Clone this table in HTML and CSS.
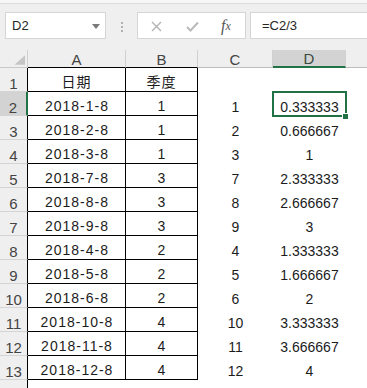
FILE: index.html
```html
<!DOCTYPE html>
<html lang="zh">
<head>
<meta charset="utf-8">
<title>Sheet</title>
<link rel="stylesheet" href="styles.css">
</head>
<body>
<div class="app">
  <div class="toolbar">
    <div class="namebox">
      <span class="nb-text">D2</span>
      <svg class="caret" width="8" height="5" viewBox="0 0 8 5"><polygon points="0,0 8,0 4,5" fill="#7a7a7a"/></svg>
    </div>
    <div class="dots"><i></i><i></i><i></i></div>
    <div class="btnbox">
      <svg class="ico-x" width="11" height="11" viewBox="0 0 11 11"><path d="M1 1 L10 10 M10 1 L1 10" stroke="#b3b3b3" stroke-width="1.4" fill="none"/></svg>
      <svg class="ico-ok" width="13" height="11" viewBox="0 0 13 11"><path d="M1 6 L4.5 9.5 L12 1.5" stroke="#bababa" stroke-width="2" fill="none"/></svg>
      <span class="fx"><span class="fx-f">f</span><span class="fx-x">x</span></span>
    </div>
    <div class="formula">=C2/3</div>
  </div>

  <div class="grid">
    <div class="hd corner"><svg width="28" height="17" viewBox="0 0 28 17"><polygon points="26,5 26,15 15,15" fill="#c6c6c6"/></svg></div>
    <div class="hd col tb">A</div>
    <div class="hd col tb">B</div>
    <div class="hd col">C</div>
    <div class="hd col sel">D</div>
    <div class="hd col last"></div>

    <div class="rh">1</div><div class="c ca cjk">日期</div><div class="c cb cjk">季度</div><div class="c"></div><div class="c"></div><div class="c"></div>

    <div class="rh rsel">2</div><div class="c ca date">2018-1-8</div><div class="c cb">1</div><div class="c">1</div><div class="c active">0.333333<span class="handle"></span></div><div class="c"></div>
    <div class="rh">3</div><div class="c ca date">2018-2-8</div><div class="c cb">1</div><div class="c">2</div><div class="c">0.666667</div><div class="c"></div>
    <div class="rh">4</div><div class="c ca date">2018-3-8</div><div class="c cb">1</div><div class="c">3</div><div class="c">1</div><div class="c"></div>
    <div class="rh">5</div><div class="c ca date">2018-7-8</div><div class="c cb">3</div><div class="c">7</div><div class="c">2.333333</div><div class="c"></div>
    <div class="rh">6</div><div class="c ca date">2018-8-8</div><div class="c cb">3</div><div class="c">8</div><div class="c">2.666667</div><div class="c"></div>
    <div class="rh">7</div><div class="c ca date">2018-9-8</div><div class="c cb">3</div><div class="c">9</div><div class="c">3</div><div class="c"></div>
    <div class="rh">8</div><div class="c ca date">2018-4-8</div><div class="c cb">2</div><div class="c">4</div><div class="c">1.333333</div><div class="c"></div>
    <div class="rh">9</div><div class="c ca date">2018-5-8</div><div class="c cb">2</div><div class="c">5</div><div class="c">1.666667</div><div class="c"></div>
    <div class="rh">10</div><div class="c ca date">2018-6-8</div><div class="c cb">2</div><div class="c">6</div><div class="c">2</div><div class="c"></div>
    <div class="rh">11</div><div class="c ca date">2018-10-8</div><div class="c cb">4</div><div class="c">10</div><div class="c">3.333333</div><div class="c"></div>
    <div class="rh">12</div><div class="c ca date">2018-11-8</div><div class="c cb">4</div><div class="c">11</div><div class="c">3.666667</div><div class="c"></div>
    <div class="rh">13</div><div class="c ca date">2018-12-8</div><div class="c cb">4</div><div class="c">12</div><div class="c">4</div><div class="c"></div>
    <div class="rh"></div><div class="c"></div><div class="c"></div><div class="c"></div><div class="c"></div><div class="c"></div>
  </div>
</div>
</body>
</html>
```

FILE: styles.css
```css
html, body {
  margin: 0;
  padding: 0;
  background: #ffffff;
  overflow: hidden;
}
.app {
  width: 367px;
  height: 388px;
  overflow: hidden;
  font-family: "Liberation Sans", Arial, sans-serif;
}
.toolbar {
  height: 50px;
  box-sizing: border-box;
  padding-top: 12px;
  display: flex;
  align-items: flex-start;
  background: linear-gradient(#f6f6f6 0 3px, #dcdcdc 3px 4px, #efefef 4px);
}
.namebox {
  margin-left: 5px;
  width: 101px;
  height: 27px;
  box-sizing: border-box;
  border: 1px solid #d5d5d5;
  background: #fff;
  display: flex;
  align-items: center;
  padding-left: 6px;
  padding-right: 5px;
}
.nb-text {
  font-size: 13px;
  color: #262626;
}
.caret {
  margin-left: auto;
  margin-top: 1px;
}
.dots {
  width: 31px;
  height: 27px;
  display: flex;
  flex-direction: column;
  align-items: center;
  justify-content: center;
  gap: 2px;
  padding-top: 2px;
  box-sizing: border-box;
}
.dots i {
  display: block;
  width: 2px;
  height: 2px;
  background: #b0b0b0;
}
.btnbox {
  width: 109px;
  height: 27px;
  box-sizing: border-box;
  border: 1px solid #d5d5d5;
  background: #fff;
  display: flex;
  align-items: center;
}
.ico-x {
  margin-left: 13px;
  margin-top: 2px;
}
.ico-ok {
  margin-left: 24px;
  margin-top: 2px;
}
.fx {
  margin-left: 22px;
  font-family: "Liberation Serif", "Times New Roman", serif;
  font-style: italic;
  color: #555;
  font-size: 16px;
  line-height: 16px;
  display: flex;
  align-items: flex-end;
}
.fx-x {
  font-size: 12px;
  margin-left: 0px;
}
.formula {
  margin-left: 4px;
  margin-right: -3px;
  flex: 1;
  height: 27px;
  box-sizing: border-box;
  border: 1px solid #d5d5d5;
  background: #fff;
  display: flex;
  align-items: center;
  padding-left: 11px;
  font-size: 13px;
  color: #262626;
}

.grid {
  display: grid;
  grid-template-columns: 28px 98px 72px 75px 73px 1fr;
  grid-template-rows: 18px repeat(14, 24px);
  background: #fff;
}
.grid > div {
  box-sizing: border-box;
  display: flex;
  align-items: flex-end;
  justify-content: center;
}
.hd {
  background: #efefef;
  border-right: 1px solid #d0d0d0;
  border-bottom: 1px solid #bdbdbd;
  font-size: 15px;
  line-height: 15px;
  color: #444;
}
.corner {
  border-bottom-color: #c8c8c8;
  align-items: flex-start !important;
}
.corner svg {
  display: block;
}
.hd.tb {
  border-bottom-color: #000;
}
.hd.sel {
  background: #d3d3d3;
  border-bottom: 2px solid #217346;
  color: #3b4a40;
}
.hd.last {
  border-right: none;
}
.rh {
  background: #efefef;
  border-right: 1px solid #000;
  border-bottom: 1px solid #d4d4d4;
  font-size: 15px;
  line-height: 15px;
  color: #444;
}
.rh.rsel {
  background: #d3d3d3;
  border-right: 2px solid #217346;
}
.c {
  font-size: 14px;
  line-height: 16px;
  padding-bottom: 1px;
  color: #1c1c1c;
}
.ca, .cb {
  border-right: 1px solid #000;
  border-bottom: 1px solid #000;
}
.cjk {
  font-family: "Noto Sans CJK SC", "Liberation Sans", sans-serif;
  font-size: 14px;
  padding-bottom: 2px;
  letter-spacing: 1px;
}
.date {
  letter-spacing: 1px;
  padding-left: 1px;
}
.active {
  position: relative;
}
.active::after {
  content: "";
  position: absolute;
  left: -1px;
  top: -1px;
  right: -1px;
  bottom: -1px;
  border: 2px solid #217346;
}
.handle {
  position: absolute;
  right: -2px;
  bottom: -3px;
  width: 5px;
  height: 5px;
  background: #217346;
  box-shadow: 0 0 0 1px #fff;
  z-index: 2;
}
```
